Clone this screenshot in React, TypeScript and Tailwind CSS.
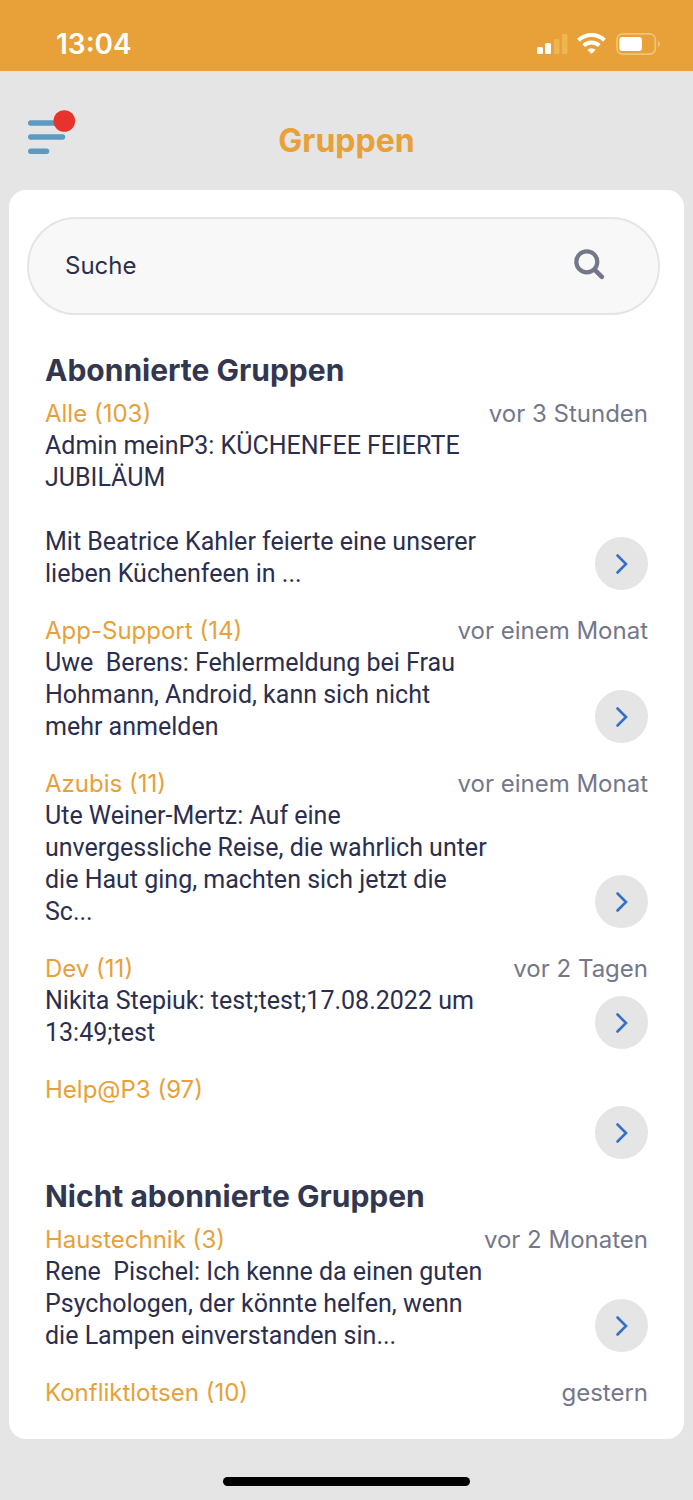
import React from 'react';

interface Group {
  name: string;
  count: number;
  time?: string;
  message?: string;
  hasButton?: boolean;
}

const subscribed: Group[] = [
  {
    name: 'Alle',
    count: 103,
    time: 'vor 3 Stunden',
    message: 'Admin meinP3: KÜCHENFEE FEIERTE JUBILÄUM\n\nMit Beatrice Kahler feierte eine unserer lieben Küchenfeen in ...',
    hasButton: true
  },
  {
    name: 'App-Support',
    count: 14,
    time: 'vor einem Monat',
    message: 'Uwe  Berens: Fehlermeldung bei Frau Hohmann, Android, kann sich nicht mehr anmelden',
    hasButton: true
  },
  {
    name: 'Azubis',
    count: 11,
    time: 'vor einem Monat',
    message: 'Ute Weiner-Mertz: Auf eine unvergessliche Reise, die wahrlich unter die Haut ging, machten sich jetzt die Sc...',
    hasButton: true
  },
  {
    name: 'Dev',
    count: 11,
    time: 'vor 2 Tagen',
    message: 'Nikita Stepiuk: test;test;17.08.2022 um 13:49;test',
    hasButton: true
  },
  { name: 'Help@P3', count: 97, hasButton: true }
];

const unsubscribed: Group[] = [
  {
    name: 'Haustechnik',
    count: 3,
    time: 'vor 2 Monaten',
    message: 'Rene  Pischel: Ich kenne da einen guten Psychologen, der könnte helfen, wenn die Lampen einverstanden sin...',
    hasButton: true
  },
  { name: 'Konfliktlotsen', count: 10, time: 'gestern' }
];

const StatusBar: React.FC = () => (
  <div className="flex h-[71px] items-end justify-between bg-[#e7a138] pr-8 pb-3 pl-14 text-white">
    <span className="text-[28px] leading-[30px] font-semibold">13:04</span>
    <svg width="125" height="22" viewBox="0 0 125 22" className="mb-1" aria-hidden="true">
      {/* Signal */}
      <rect x="1" y="14" width="6" height="7" rx="1.5" fill="#fff" />
      <rect x="9" y="10" width="6" height="11" rx="1.5" fill="#fff" />
      <rect x="18" y="6" width="5.5" height="15" rx="1.5" fill="#efb650" />
      <rect x="26" y="1" width="5.5" height="20" rx="1.5" fill="#efb650" />
      {/* Wifi */}
      <g fill="none" stroke="#fff" strokeWidth="4">
        <path d="M42.5 7.2a19 19 0 0 1 26 0" />
        <path d="M47.7 12.6a11.3 11.3 0 0 1 15.6 0" />
      </g>
      <path d="M51.4 16.8a6.2 6.2 0 0 1 8.2 0L55.5 21z" fill="#fff" />
      {/* Battery */}
      <rect x="80.9" y="0.9" width="38.4" height="20.2" rx="5.5" fill="none" stroke="#f1c27a" strokeWidth="1.7" />
      <rect x="83.3" y="4" width="22.7" height="14" rx="3" fill="#fff" />
      <path d="M122 8c2.6 1 2.6 5 0 6z" fill="#f1c27a" />
    </svg>
  </div>
);

const GroupItem: React.FC<{ group: Group }> = ({ group }) => (
  <li>
    <div className="flex justify-between text-[24px] leading-8">
      <h3 className="text-[#e7a138]">
        {group.name} ({group.count})
      </h3>
      {group.time && <span className="text-[#74778a]">{group.time}</span>}
    </div>
    <div className="flex items-end justify-between">
      <p className="w-[74%] font-[Roboto,sans-serif] text-[25px] leading-8 whitespace-pre-wrap">
        {group.message}
      </p>
      {group.hasButton && (
        <button
          type="button"
          aria-label={`${group.name} öffnen`}
          className="flex size-[53px] shrink-0 items-center justify-center rounded-full bg-[#e5e5e5]"
        >
          <svg width="14" height="22" viewBox="0 0 14 22" aria-hidden="true">
            <path d="M2.5 2.5 11 11l-8.5 8.5" fill="none" stroke="#3570c8" strokeWidth="2.6" strokeLinecap="round" />
          </svg>
        </button>
      )}
    </div>
  </li>
);

const GroupSection: React.FC<{ title: string; groups: Group[] }> = ({ title, groups }) => (
  <section>
    <h2 className="mb-4 text-[30px] leading-6 font-bold text-[#33364f]">{title}</h2>
    <ul className="flex flex-col gap-[25px]">
      {groups.map((group) => (
        <GroupItem key={group.name} group={group} />
      ))}
    </ul>
  </section>
);

const App: React.FC = () => {
  return (
    <div className="flex min-h-screen flex-col bg-[#e5e5e5] font-[Inter,sans-serif] text-[#2b2e4d]">
      <StatusBar />

      {/* Header */}
      <header className="grid h-[119px] grid-cols-[1fr_auto_1fr] items-center px-7 pt-5">
        <button type="button" aria-label="Menü" className="mb-4 w-12">
          <svg width="48" height="46" viewBox="0 0 48 46" aria-hidden="true">
            <g stroke="#5b9ac1" strokeWidth="5.5" strokeLinecap="round">
              <path d="M2.75 13H30" />
              <path d="M2.75 27H34.5" />
              <path d="M2.75 41.3H18.5" />
            </g>
            <circle cx="36.3" cy="11" r="10.8" fill="#e8332c" />
          </svg>
        </button>
        <h1 className="text-[32px] leading-9 font-bold text-[#e7a138]">Gruppen</h1>
      </header>

      {/* Content card */}
      <main className="mx-[9px] rounded-[17px] bg-white pt-[27px] pb-[30px]">
        <label className="mr-6 ml-[18px] flex h-[98px] items-center rounded-full border-2 border-[#e5e5e5] bg-[#f8f8f8] pr-[53px] pl-9">
          <input
            type="search"
            aria-label="Suche"
            placeholder="Suche"
            className="min-w-0 flex-1 text-[24px] leading-8 outline-none placeholder:text-[#2b2e4d]"
          />
          <svg width="31" height="31" viewBox="0 0 31 31" className="mb-1" fill="none" stroke="#74778a" aria-hidden="true">
            <circle cx="12.8" cy="12.8" r="10.5" strokeWidth="4.2" />
            <path d="m20.8 20.8 7 7" strokeWidth="4.6" strokeLinecap="round" />
          </svg>
        </label>

        <div className="mt-[43px] flex flex-col gap-[25px] px-9">
          <GroupSection title="Abonnierte Gruppen" groups={subscribed} />
          <GroupSection title="Nicht abonnierte Gruppen" groups={unsubscribed} />
        </div>
      </main>

      {/* Home indicator */}
      <div className="mt-auto mb-[14px] h-[9px] w-[247px] self-center rounded-full bg-black" />
    </div>
  );
};

export default App;
